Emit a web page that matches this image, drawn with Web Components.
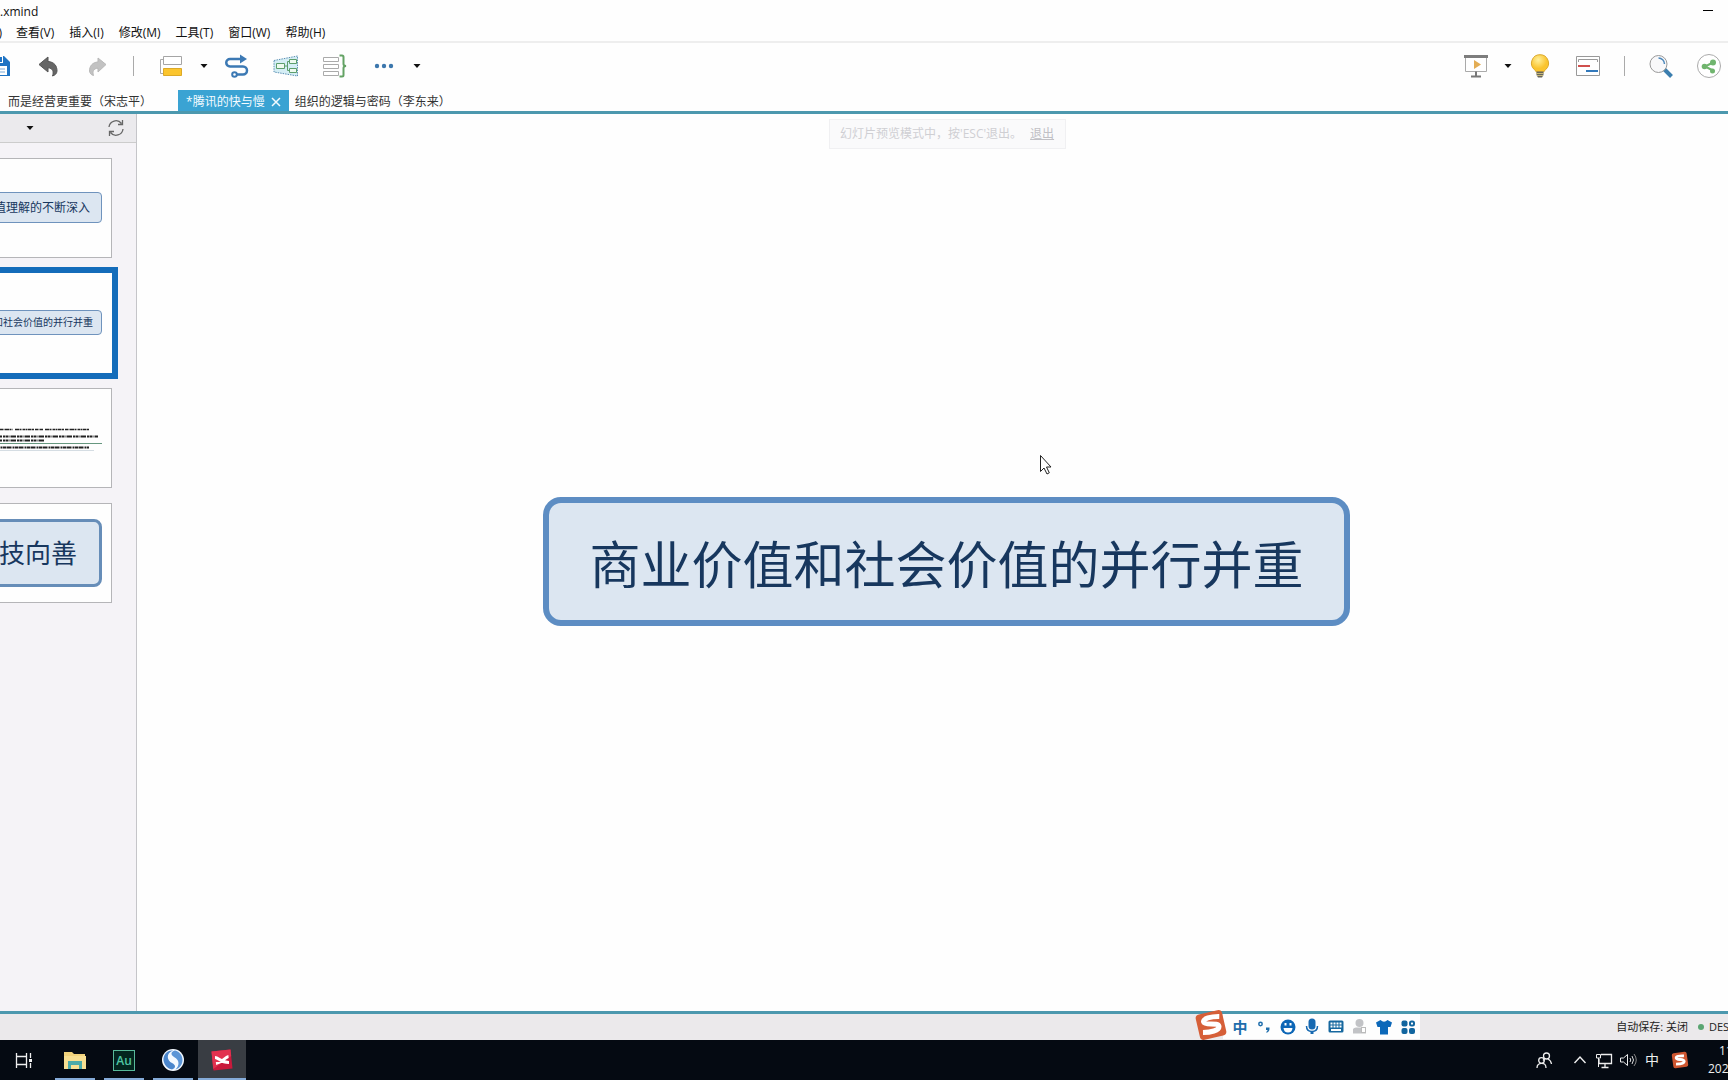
<!DOCTYPE html>
<html lang="zh-CN">
<head>
<meta charset="utf-8">
<title>xmind</title>
<style>
  html, body { margin: 0; height: 100%; overflow: hidden; }
  body { font: 12px/16px "Open Sans", "Noto Sans CJK SC", sans-serif; color: #1b1b1b; background: #fefefe; }
</style>
</head>
<body>
<mind-app></mind-app>

<template id="app-tpl">
  <style>
    :host { display: grid; grid-template-rows: auto auto auto auto 1fr auto auto; height: 100vh; --line: #4c98ae; --topic: #dce6f1; --ink: #17375e; }
    main { display: flex; min-height: 0; border-top: 3px solid var(--line); border-bottom: 3px solid var(--line); }
  </style>
  <title-bar></title-bar>
  <menu-bar></menu-bar>
  <tool-bar></tool-bar>
  <doc-tabs></doc-tabs>
  <main>
    <slide-panel></slide-panel>
    <mind-canvas></mind-canvas>
  </main>
  <status-bar></status-bar>
  <task-bar></task-bar>
</template>

<script>
const svg = (w, h, body) => `<svg width="${w}" height="${h}" viewBox="0 0 ${w} ${h}" fill="none" aria-hidden="true">${body}</svg>`;

const ICONS = {
  save: svg(24, 24, '<path d="M3 2h15l6 6v14H3z" fill="#1f74c4"/><path d="M8 2h9v7H8z" fill="#fff"/><path d="M13 3h3v5h-3z" fill="#1f74c4"/><path d="M6 12h15v9H6z" fill="#fff"/><path d="M8 15h11M8 18h11" stroke="#79a9d6"/>'),
  undo: svg(24, 24, '<path d="M4 10.500 13 3v4.500c6.500.5 9 4.500 9 9.500-.3 2.500-1.500 4-4.500 5 1.500-4 .5-8-4.500-8.200V18z" fill="#666" stroke="#555"/>'),
  redo: svg(24, 24, '<path d="M22 10.500 14 4v4c-6 .3-8.500 4.500-8.500 9 .3 2 1.500 4 4 4.500-1.300-4 0-7 4.500-7.300V18z" fill="#c2c2c2" stroke="#b8b8b8"/>'),
  topic: svg(24, 24, '<path d="M5 5.500H1.500v14H4" stroke="#aaa"/><path d="M4.500 2.500h18v8h-18z" fill="#fff" stroke="#a5a5a5"/><path d="M4.500 14.500h18v7h-18z" fill="#fbc52e" stroke="#dca927"/>'),
  relation: svg(24, 24, '<path d="M17 5H5a3.700 3.700 0 0 0 0 7.500h13a4 4 0 0 1 0 8H12" stroke="#3c79b4" stroke-width="2.500"/><path d="m15 .5 7 4.500-7 4.500z" fill="#3c79b4"/><circle cx="9.500" cy="20.500" r="2.300" fill="#fff" stroke="#3c79b4" stroke-width="2"/>'),
  boundary: svg(26, 24, '<path d="M1 6.500 24.500 2v20L1 18z" fill="#d5eef5" stroke="#5c90b4" stroke-dasharray="1.500 1"/><path d="M3.500 9.500h8v5h-8zM16.500 5.500h7v4h-7zM16.500 14.500h7v4h-7z" fill="#eefaf0" stroke="#5d9e6c"/><path d="M12 12h2.500m2-4.500h-2v9h2" stroke="#5d9e6c"/>'),
  summary: svg(26, 24, '<path d="M1.500 3.500h15v4h-15zM1.500 10.500h15v4h-15zM1.500 17.500h15v4h-15z" fill="#fff" stroke="#aaa"/><path d="M17.500 1.500H20q1.500 0 1.500 1.500v7q0 1.700 2.500 2-2.500.3-2.500 2v7q0 1.500-1.500 1.500h-2.500" stroke="#63a264" stroke-width="2"/>'),
  more: svg(24, 24, '<g fill="#3c77ad"><circle cx="5" cy="12" r="2.200"/><circle cx="12" cy="12" r="2.200"/><circle cx="19" cy="12" r="2.200"/></g>'),
  caret: svg(8, 24, '<path d="M.5 10h7L4 14z" fill="#111"/>'),
  present: svg(24, 24, '<path d="M1.500 3h21v14.500h-21z" fill="#fff" stroke="#aaa"/><path d="M0 1h24v3H0z" fill="#7d7d7d"/><path d="m10 6 7 4.500-7 4.500z" fill="#e3ad55"/><path d="M12 17.500V22M7 22.500h10" stroke="#777" stroke-width="2"/>'),
  bulb: svg(24, 24, '<defs><radialGradient id="b" cx=".4" cy=".3"><stop stop-color="#fff09a"/><stop offset="1" stop-color="#fac42e"/></radialGradient></defs><path d="M12 .7a8.500 8.500 0 0 0-5.500 15c1 .9 1.500 1.600 1.800 2.300h7.400c.3-.7.800-1.400 1.800-2.300A8.500 8.500 0 0 0 12 .7z" fill="url(#b)" stroke="#dba92d"/><path d="M8.500 17.500h7V21L14 23.500h-4L8.500 21z" fill="#68655a"/><path d="M8.500 19.500h7M9 21.500h6" stroke="#c6b878"/>'),
  gantt: svg(24, 24, '<path d="M.5 2.500h23v19H.5z" fill="#fff" stroke="#999"/><path d="M2.500 8V5.500h19V8" stroke="#9a9a9a"/><path d="M2 12h12" stroke="#d0504d" stroke-width="2"/><path d="M10 17h12" stroke="#3379bb" stroke-width="2"/>'),
  search: svg(24, 24, '<path d="m15 15 7.500 7.500" stroke="#3b7eae" stroke-width="4"/><circle cx="9.500" cy="10" r="8.500" fill="#f8f8fa" stroke="#999"/><path d="M9.500 4a6 6 0 0 1 6 6" stroke="#4d88ba" stroke-width="1.500"/>'),
  share: svg(24, 24, '<circle cx="12" cy="12" r="11.500" fill="#fff" stroke="#aaa"/><path d="M16 8.500 8 12.500l8 4" stroke="#70b56e" stroke-width="2"/><g fill="#70b56e"><circle cx="16" cy="8.500" r="3"/><circle cx="7.500" cy="12.500" r="2.800"/><circle cx="15.500" cy="17" r="2.500"/></g>'),
  refresh: svg(18, 18, '<path d="M2 8a7 7 0 0 1 12.500-3.500M16 10A7 7 0 0 1 3.500 13.500M15.500 1v4.500H11M2.500 17v-4.500H7" stroke="#666" stroke-width="1.300"/>'),
  close: svg(10, 10, '<path d="m1 1 8 8m0-8L1 9" stroke="#f4fbff" stroke-width="1.500"/>'),
  punct: svg(20, 20, '<circle cx="6.500" cy="7" r="1.700" stroke="#1f6eac" stroke-width="1.500"/><path d="M12 10.500h3.500q.5 4-3 5.500v-1.500q1-.5 1-1.500H12z" fill="#1f6eac"/>'),
  smile: svg(20, 20, '<circle cx="10" cy="10" r="7.500" fill="#0d66b6"/><path d="M5.500 11h9q-.5 4.500-4.500 4.500T5.500 11z" fill="#fff"/><path d="M7.500 6v2.500m5-2.500v2.500" stroke="#fff" stroke-width="2"/>'),
  mic: svg(20, 20, '<rect x="6.500" y="1.500" width="7" height="11" rx="3.500" fill="#1769b1"/><path d="M4.500 9q0 5.500 5.500 5.500T15.500 9" stroke="#1769b1" stroke-width="1.500"/><path d="M10 15v2" stroke="#1769b1" stroke-width="3"/>'),
  keys: svg(20, 20, '<rect x="2.500" y="3.500" width="15" height="12" rx="1.500" fill="#17689f"/><path d="M4.500 6.500h11M4.500 9.500h11" stroke="#fff" stroke-width="2" stroke-dasharray="2 1"/><path d="M5 13h10" stroke="#fff" stroke-width="2"/>'),
  person: svg(20, 20, '<circle cx="9.500" cy="6" r="4" fill="#c2c3c6"/><path d="M3 16.500V12q1-1.500 3-1.500h7q3 0 3 2v4z" fill="#c2c3c6"/><rect x="11.500" y="10.500" width="4" height="5" fill="#fff" stroke="#bbb"/>'),
  shirt: svg(20, 20, '<path d="M6.500 3 2 5.500 3.500 10H6v7.500h8V10h2.500L18 5.500 13.500 3Q10 6.500 6.500 3z" fill="#0c68b9"/>'),
  grid: svg(20, 20, '<g fill="#11659f"><rect x="3.500" y="3.500" width="6" height="6" rx="2"/><rect x="3.500" y="11" width="6" height="6" rx="2"/><rect x="11" y="11" width="6" height="6" rx="2"/></g><rect x="12" y="4.500" width="4" height="4" rx="1.500" stroke="#11659f" stroke-width="2"/>'),
  sogou: svg(32, 32, '<g transform="rotate(-13 16 16)"><rect x="2.500" y="3" width="27" height="26" rx="4" fill="#d65f38"/><path d="M26 9.500C18 7.500 9 8 9.500 11.500c.5 4 14 3 14 7.500-.5 4.500-10 4-17 2.500" stroke="#fff" stroke-width="5"/></g>'),
  sogouSmall: svg(18, 18, '<g transform="rotate(-8 9 9)"><rect x="1.500" y="1.500" width="15" height="15" rx="2" fill="#ce5630"/><path d="M13.500 5.500q-8-1.500-8 1c0 2.500 7.500 1.500 7.500 4.500-.5 2.500-5 2-8.500 1.500" stroke="#fff" stroke-width="2.800"/></g>'),
  taskview: svg(24, 24, '<path d="M2.500 5v3.500h10V5M2.500 20v-3.500h10V20M2.500 8.500v8m10-8v8" stroke="#eee" stroke-width="1.300"/><path d="M16.500 5v5m0 5v5" stroke="#eee" stroke-width="1.300"/><path d="M15 11h3v3h-3z" fill="#eee"/>'),
  folder: svg(24, 24, '<path d="M1 4h8l2 2h11v15H1z" fill="#f1d27b"/><path d="M1 8h22v13H1z" fill="#f8df91"/><path d="M5 13h14v8h-3v-4H8v4H5z" fill="#4caaa9"/>'),
  swirl: svg(24, 24, '<circle cx="12" cy="12" r="11" fill="#f4f9ff"/><path d="M12 2.500C6 2 2 7 2.500 12.500c1 5 4 8 8.500 9 4-1.500 4-4.500 0-6.500C6 13 4.500 5 12 2.500z" fill="#4b86cc"/><path d="M14 2.500c-4.500 1.500-4.500 4-1 6.500 6 3 5.500 9 1.500 12.500 4-1 7-5 7-9.500s-3-8.500-7.500-9.500z" fill="#5c95d6"/>'),
  xmind: svg(24, 24, '<path d="m1.500 3.500 19-2 2 19-19 2z" fill="#c91a3c"/><path d="m1.500 3.500 19-2 .7 6.500-18 13z" fill="#e2314f"/><path d="M5 9.500c4 0 5 5 14 5M18.500 8.500c-4 .5-5 6-12.500 7" stroke="#fff" stroke-width="2.800"/>'),
  people: svg(20, 20, '<g stroke="#eee" stroke-width="1.300"><circle cx="12.500" cy="6" r="3"/><path d="M10.500 9 9 10.500M14 9q3 1.500 3.500 5"/><circle cx="7.500" cy="10.500" r="2.800"/><path d="M3 18q0-4.500 4.500-4.700T12 18"/></g>'),
  chevron: svg(20, 20, '<path d="m4.500 13 5.500-6 5.500 6" stroke="#eee" stroke-width="1.400"/>'),
  monitor: svg(20, 20, '<path d="M7 4.500h10.500v9H5V9M11 14v3M7.500 17.500h7" stroke="#eee" stroke-width="1.300"/><path d="M2.500 4.500h4V8h-4zM4.500 8v9" stroke="#eee"/>'),
  volume: svg(20, 20, '<path d="M2.500 8h3l4-3.500v11L5.500 12h-3z" stroke="#eee"/><path d="M12 8q1.500 2 0 4M14 6q3 4 0 8" stroke="#ddd"/><path d="M16 4q4.500 6 0 12" stroke="#888"/>'),
  cursor: svg(14, 22, '<path d="M1.500 1.500v16l3.500-3.500 3 6 2.300-1.200L7.500 13H12z" fill="#fff" stroke="#222"/>'),
  notes: svg(176, 98, '<g stroke="#222"><path d="M20 40.500h58m2 0h28m2 0h45" stroke-width="1.500" stroke-dasharray="4 .5 2 1 3 .5 1 .5"/><path d="M20 47.500h143M20 51.500h90" stroke-width="2" stroke-dasharray="5 1 2 .5 3 1 1 .5"/><path d="M20 58.500h134" stroke-width="2" stroke-dasharray="3 .5 5 1 2 .5"/></g><path d="M20 54.500h147" stroke="#66977f"/><path d="M20 61.500h139" stroke="#d5dde3"/>')
};

const RESET = `
  :host { box-sizing: border-box; }
  button { all: unset; box-sizing: border-box; cursor: default; flex: none; display: flex; align-items: center; justify-content: center; }
  svg { display: block; flex: none; }`;

function define(name, build) {
  customElements.define(name, class extends HTMLElement {
    connectedCallback() {
      if (this.shadowRoot) return;
      this.attachShadow({ mode: 'open' }).innerHTML = build(this);
    }
  });
}
const button = (icon, label, cls = '') => `<button class="${cls}" aria-label="${label}">${ICONS[icon]}</button>`;

define('title-bar', () => `<style>${RESET}
  :host { display: flex; justify-content: space-between; height: 24px; line-height: 24px; color: #111; overflow: hidden; }
  button { width: 46px; height: 20px; margin-right: -3px; }
  i { width: 10px; height: 1px; background: #000; }
  </style><span>.xmind</span><button aria-label="最小化"><i></i></button>`);

define('menu-bar', () => `<style>${RESET}
  :host { display: flex; gap: 15px; height: 19px; padding-top: 1px; border-bottom: 2px solid #eee; color: #111; line-height: 16px; }
  button { height: 16px; }
  .cut { width: 2px; margin-right: -1px; justify-content: flex-end; }
  </style><button class="cut">)</button>
  ${['查看(V)', '插入(I)', '修改(M)', '工具(T)', '窗口(W)', '帮助(H)'].map(t => `<button>${t}</button>`).join('')}`);

define('tool-bar', () => `<style>${RESET}
  :host { display: flex; justify-content: space-between; height: 47px; padding-bottom: 2px; overflow: hidden; }
  div { display: flex; align-items: center; gap: 25px; margin-left: -14px; }
  .right { gap: 24px; padding-right: 7px; }
  button { width: 24px; height: 24px; }
  .caret { width: 8px; margin: 0 -8px; }
  i { width: 1px; height: 20px; background: #aaa; }
  </style>
  <div>${button('save', '保存')}${button('undo', '撤销')}${button('redo', '重做')}<i></i>${button('topic', '主题')}${button('caret', '主题选项', 'caret')}${button('relation', '联系')}${button('boundary', '外框')}${button('summary', '概要')}${button('more', '更多')}${button('caret', '更多选项', 'caret')}</div>
  <div class="right">${button('present', '演示')}${button('caret', '演示选项', 'caret')}${button('bulb', '头脑风暴')}${button('gantt', '甘特图')}<i></i>${button('search', '搜索')}${button('share', '分享')}</div>`);

define('doc-tabs', () => `<style>${RESET}
  :host { display: flex; height: 21px; color: #333; }
  div { display: flex; align-items: center; gap: 6px; padding: 2px 8px 0; white-space: nowrap; }
  .first { padding-right: 26px; }
  div:last-child { padding-left: 6px; }
  .on { background: #3aa3d3; color: #f4fbff; }
  </style>
  <div class="first"><button>而是经营更重要（宋志平）</button></div>
  <div class="on"><button>*腾讯的快与慢</button>${button('close', '关闭')}</div>
  <div><button>组织的逻辑与密码（李东来）</button></div>`);

define('topic-node', () => `<style>
  :host { display: block; box-sizing: border-box; flex: none; white-space: nowrap; background: var(--topic); color: var(--ink); border: 1px solid #6f93bd; border-radius: 4px; padding: 6px 11px; font-size: 12px; line-height: 17px; }
  :host([size="small"]) { font-size: 10px; line-height: 15px; padding: 4px 8px; }
  :host([size="big"]) { font-size: 26px; line-height: 38px; border-width: 3px; border-color: #668db8; border-radius: 8px; padding: 12px 22px; }
  :host([size="main"]) { font-size: 51px; line-height: 73px; border: 6px solid #5d8dc3; border-radius: 18px; padding: 25px 40px 19px; }
  </style><slot></slot>`);

define('slide-thumb', () => `<style>${RESET}
  :host { display: flex; align-items: center; justify-content: flex-end; flex: none; width: 178px; height: 100px; background: #fefefe; border: 1px solid #b5b5b8; padding: 0 9px 1px 0; }
  :host([selected]) { border-color: #fefefe; outline: 6px solid #146cba; }
  :host([notes]) { padding: 0; }
  </style><slot></slot>`);

define('note-lines', () => `<style>${RESET} :host { display: block; }</style>${ICONS.notes}`);

define('slide-panel', () => `<style>${RESET}
  :host { display: flex; flex-direction: column; flex: none; width: 137px; background: #f5f3f7; border-right: 1px solid #c5c5c9; overflow: hidden; }
  header { display: flex; align-items: center; justify-content: space-between; height: 28px; padding: 0 11px 0 26px; background: #ebeaed; border-bottom: 1px solid #ccc; }
  section { display: flex; flex-direction: column; align-items: flex-end; gap: 15px; padding: 15px 24px 0 0; }
  </style>
  <header>${button('caret', '选择')}${button('refresh', '刷新')}</header>
  <section>
    <slide-thumb><topic-node>值理解的不断深入</topic-node></slide-thumb>
    <slide-thumb selected><topic-node size="small">和社会价值的并行并重</topic-node></slide-thumb>
    <slide-thumb notes><note-lines></note-lines></slide-thumb>
    <slide-thumb><topic-node size="big">科技向善</topic-node></slide-thumb>
  </section>`);

define('mind-canvas', () => `<style>${RESET}
  :host { position: relative; display: flex; flex: 1; min-width: 0; align-items: center; justify-content: center; padding: 0 0 2px 28px; background: #fefefe; }
  aside { position: absolute; top: 5px; left: 692px; display: flex; gap: 8px; padding: 6px 11px 6px 10px; border: 1px solid #f0f0f2; background: #fafafb; color: #cfcfd3; white-space: nowrap; line-height: 16px; }
  a { color: #c0c0c5; }
  .cursor { position: absolute; left: 902px; top: 340px; }
  </style>
  <topic-node size="main">商业价值和社会价值的并行并重</topic-node>
  <aside>幻灯片预览模式中，按'ESC'退出。 <a href="#">退出</a></aside>
  <span class="cursor">${ICONS.cursor}</span>`);

define('ime-bar', () => `<style>${RESET}
  :host { display: flex; align-items: center; height: 25px; }
  .logo { width: 32px; height: 32px; margin-top: -4px; z-index: 1; }
  div { display: flex; height: 25px; margin-left: -4px; padding-left: 5px; background: #fefefe; }
  div button { width: 24px; color: #1f6eac; font-size: 15px; font-weight: 700; }
  </style>${button('sogou', '搜狗输入法', 'logo')}
  <div><button>中</button>${button('punct', '标点')}${button('smile', '表情')}${button('mic', '语音')}${button('keys', '键盘')}${button('person', '账户')}${button('shirt', '皮肤')}${button('grid', '工具箱')}</div>`);

define('status-bar', () => `<style>${RESET}
  :host { position: relative; display: flex; align-items: center; justify-content: flex-end; height: 26px; background: #ebe9eb; color: #222; font-size: 11px; white-space: nowrap; }
  ime-bar { position: absolute; right: 308px; top: 0; }
  i { width: 6px; height: 6px; margin: 0 5px 0 10px; border-radius: 50%; background: #5aa572; }
  b { font-weight: 400; width: 19px; }
  </style><ime-bar></ime-bar><span>自动保存: 关闭</span><i></i><b>DES</b>`);

define('task-bar', () => `<style>${RESET}
  :host { display: flex; justify-content: space-between; height: 40px; background: #050a12; color: #eee; overflow: hidden; }
  nav, div { display: flex; align-items: center; }
  nav { gap: 1px; padding-left: 2px; }
  nav button { width: 48px; height: 40px; }
  .run { background: linear-gradient(#85abd8, #85abd8) center bottom / 40px 2px no-repeat; }
  .on { background: linear-gradient(#85abd8, #85abd8) center bottom / 48px 2px no-repeat #393d43; }
  .au span { box-sizing: border-box; width: 22px; height: 21px; border: 1px solid #58b99a; background: #03251f; color: #4fc6a4; font: 600 12px/19px "Open Sans", sans-serif; text-align: center; }
  div button { width: 24px; height: 40px; font-size: 14px; }
  .people { margin-right: 12px; }
  .sg { margin: 0 16px 0 4px; }
  time { display: flex; flex-direction: column; width: 20px; line-height: 18px; }
  time span:first-child { padding-left: 11px; }
  </style>
  <nav>${button('taskview', '任务视图')}${button('folder', '文件资源管理器', 'run')}<button class="run au"><span>Au</span></button>${button('swirl', '浏览器', 'run')}${button('xmind', '思维导图', 'on')}</nav>
  <div>${button('people', '人脉', 'people')}${button('chevron', '显示隐藏的图标')}${button('monitor', '网络')}${button('volume', '音量')}<button>中</button>${button('sogouSmall', '输入法', 'sg')}<time><span>11</span><span>202</span></time></div>`);

customElements.define('mind-app', class extends HTMLElement {
  constructor() {
    super();
    this.attachShadow({ mode: 'open' }).append(document.getElementById('app-tpl').content.cloneNode(true));
  }
});
</script>
</body>
</html>
